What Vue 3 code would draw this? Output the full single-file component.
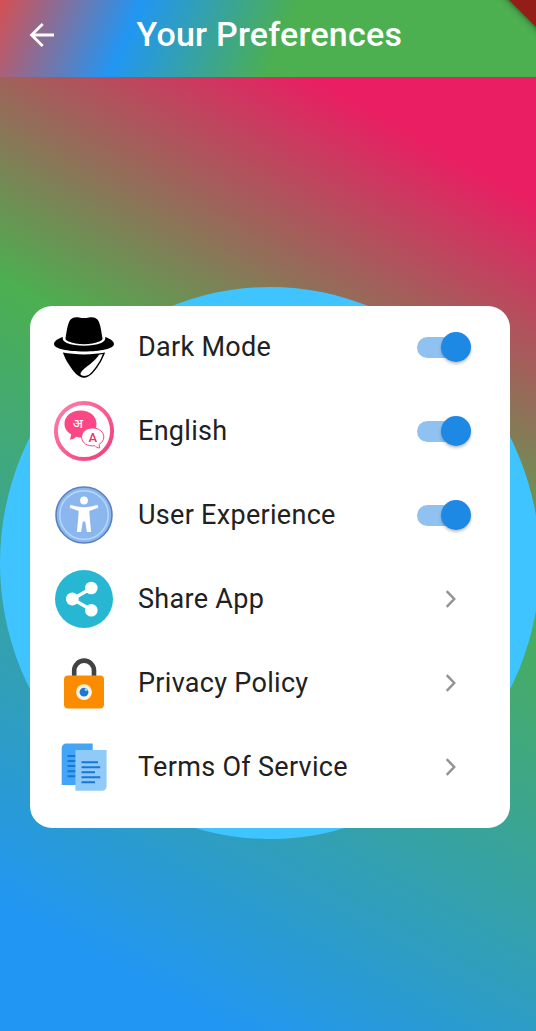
<script setup>
const rows = [
  { icon: 'dark', label: 'Dark Mode', toggle: true },
  { icon: 'language', label: 'English', toggle: true },
  { icon: 'experience', label: 'User Experience', toggle: true },
  { icon: 'share', label: 'Share App', toggle: false },
  { icon: 'privacy', label: 'Privacy Policy', toggle: false },
  { icon: 'terms', label: 'Terms Of Service', toggle: false },
]
</script>

<template>
  <div class="screen">
    <header class="bar">
      <svg class="back" width="28" height="28" viewBox="0 0 28 28">
        <path d="M26 14H4M14.700 3 3.600 14l11.100 11" fill="none" stroke="#fff" stroke-width="2.800" />
      </svg>
      <h1 class="title">Your Preferences</h1>
      <span class="ribbon"></span>
    </header>

    <main class="body">
      <div class="disc"></div>
      <section class="card">
        <div v-for="row in rows" :key="row.label" class="row">
          <svg class="icon" width="80" height="80" viewBox="0 0 80 80">
            <g v-if="row.icon === 'dark'" transform="translate(0 -0.700)">
              <path d="M21.500 32C22.500 27 23.300 17.500 26.300 13.500 28.500 11 32 10.500 35 11.200c2 .5 3 .6 5 .6s3-.1 5-.6c3-.7 6.700-.2 8.700 2.300 3 4 3.800 13.500 4.800 18.500.2 1.200-.8 2.200-2.500 3-9 4-23 4-32 0-1.700-.8-2.700-1.800-2.500-3z" />
              <path d="M18.800 30.800c-4 1.500-8.800 3.700-8.800 7 0 4.700 13.500 7.500 30 7.500s30-2.800 30-7.500c0-3.300-4.800-5.500-8.800-7 .6 2.700-1 4.700-4 5.800-9.500 3.700-25 3.700-34.400 0-3-1.100-4.600-3.100-4-5.800z" />
              <path d="M18.800 46.300c12 2.400 30.400 2.400 42.400 0-1.700 3.600-3.200 8.200-6.700 13-3.700 5.700-8.500 12.200-14.500 12.200S29 64.700 25.500 59.300c-3.500-4.500-5-9.400-6.700-13z" />
              <path d="M58.800 47.600C57 53.500 51.500 62 46 67.500c-2.500 2.700-8.500 2.700-9.500.5-.3-5 13-10.500 18.500-19.600z" fill="#fff" />
            </g>
            <g v-else-if="row.icon === 'language'">
              <defs>
                <linearGradient id="pinkRing" x1="0" y1="0" x2="1" y2="1">
                  <stop offset="0" stop-color="#ff80a9" />
                  <stop offset="1" stop-color="#ef3c7c" />
                </linearGradient>
              </defs>
              <circle cx="40" cy="40" r="28.100" fill="#fff" stroke="url(#pinkRing)" stroke-width="4" />
              <path d="M36.500 19.500c9.400 0 16 5.800 16 13.300S46 46.500 37 46.500c-2 0-3.500-.3-5-.8-1.300 1.600-3 2.500-6 2.800l1.200-5.300c-4.500-2.400-6.700-6-6.700-10.400 0-7.500 6.800-13.300 16-13.300z" fill="#fb4784" />
              <text class="hindi" x="34" y="37" text-anchor="middle">अ</text>
              <path d="M48.500 37c6.600 0 11.300 3.900 11.300 9 0 3.100-1.800 5.700-4.700 7.300l.5 3.700c-2.300-.2-3.700-1-4.700-2.300-7.500 1.200-13.300-2.900-13.300-8.700 0-5.100 4.700-9 10.900-9z" fill="#fff" stroke="#fb4784" stroke-width="1" />
              <text class="latin" x="48.900" y="50.700" text-anchor="middle">A</text>
            </g>
            <g v-else-if="row.icon === 'experience'">
              <circle cx="40" cy="40" r="28" fill="#8cb6ee" stroke="#5b82c0" stroke-width="1.600" />
              <circle cx="40" cy="40" r="24.300" fill="none" stroke="#b4dafd" stroke-width="1.500" />
              <circle cx="40" cy="25.500" r="3.900" fill="#fff" />
              <path d="M26.500 29.800c4.500 1.300 9 2.400 13.500 2.400s9-1.100 13.500-2.400l.8 2.900-9 3.200.6 8.600 1.200 12.400h-4.200L41.200 46.500h-2.400l-1.700 10.400h-4.200l1.200-12.400.6-8.600-9-3.200z" fill="#fff" />
            </g>
            <g v-else-if="row.icon === 'share'">
              <circle cx="40" cy="40" r="29" fill="#27b7d2" />
              <path d="M47.500 29.200 28.500 40l19 11" fill="none" stroke="#fff" stroke-width="3.400" />
              <circle cx="47.300" cy="29" r="6.300" fill="#fff" />
              <circle cx="28.300" cy="40" r="6.400" fill="#fff" />
              <circle cx="47.300" cy="51.200" r="6.300" fill="#fff" />
            </g>
            <g v-else-if="row.icon === 'privacy'">
              <path d="M30.200 35V27.500a9.900 9.900 0 0 1 19.800 0V35" fill="none" stroke="#424242" stroke-width="4.600" />
              <rect x="20" y="32.500" width="40" height="33" rx="4" fill="#fb8c00" />
              <circle cx="40" cy="49.200" r="7.900" fill="#fff3e0" />
              <circle cx="40" cy="49.200" r="4.400" fill="#1e78d2" />
              <circle cx="42.200" cy="46.600" r="1.500" fill="#a9d2f5" />
            </g>
            <g v-else>
              <path d="M22.200 16.500h26.500v41.500H17.700V21a4.500 4.500 0 0 1 4.500-4.500z" fill="#42a5f5" />
              <path d="M23.500 29h9M23.500 34h9M23.500 39h9M23.500 44.300h9M23.500 49.300h9" stroke="#1976d2" stroke-width="2" />
              <path d="M31.400 23h31.200v36.200a4.500 4.500 0 0 1-4.500 4.500H31.400z" fill="#90caf9" />
              <path d="M37.500 35.200h16.500M37.500 40.300h18.700M37.500 45.300h13.500M37.500 50.300h18.700M37.500 55.300h13.500" stroke="#1976d2" stroke-width="1.900" />
            </g>
          </svg>
          <span class="label">{{ row.label }}</span>
          <span v-if="row.toggle" class="switch"><span class="thumb"></span></span>
          <svg v-else class="chevron" width="14" height="20" viewBox="0 0 14 20">
            <path d="m2.700 2.200 7.500 7.800-7.500 7.800" fill="none" stroke="#949494" stroke-width="2.500" />
          </svg>
        </div>
      </section>
    </main>
  </div>
</template>

<style scoped>
.screen {
  width: 536px;
  height: 1031px;
  overflow: hidden;
  display: flex;
  flex-direction: column;
  font-family: Roboto, "Liberation Sans", sans-serif;
}
.bar {
  position: relative;
  overflow: hidden;
  flex: none;
  height: 77px;
  box-sizing: border-box;
  padding: 0 0 7px 28px;
  display: flex;
  align-items: center;
  background: linear-gradient(113.5deg, #f44336 -22px, #2196f3 130px, #4caf50 275px);
}
.back {
  flex: none;
}
.title {
  margin: -2px 0 0 80.5px;
  font-size: 34px;
  line-height: 40px;
  font-weight: 500;
  letter-spacing: 0.22px;
  color: #fff;
  white-space: nowrap;
}
.ribbon {
  position: absolute;
  top: -19.5px;
  right: -42.5px;
  width: 120px;
  height: 24px;
  background: #951d18;
  box-shadow: 0 0 6px rgba(0, 0, 0, 0.6);
  transform: rotate(45deg);
}
.body {
  position: relative;
  flex: 1;
  box-sizing: border-box;
  padding: 229px 26px 0 30px;
  background: linear-gradient(209.33deg, #e91e63 10%, #4caf50 40%, #2196f3 90%);
}
.disc {
  position: absolute;
  left: 0;
  top: 210px;
  width: 540px;
  height: 552px;
  border-radius: 50%;
  background: #40c4ff;
}
.card {
  position: relative;
  box-sizing: border-box;
  height: 522px;
  border-radius: 22px;
  background: #fff;
}
.row {
  height: 84px;
  box-sizing: border-box;
  padding: 0 39px 2px 14px;
  display: flex;
  align-items: center;
}
.icon {
  flex: none;
}
.label {
  flex: 1;
  margin-left: 14px;
  font-size: 27px;
  line-height: 36px;
  letter-spacing: 0.3px;
  color: #212121;
  white-space: nowrap;
}
.switch {
  position: relative;
  width: 54px;
  height: 30px;
  display: flex;
  align-items: center;
  justify-content: flex-end;
}
.switch::before {
  content: "";
  position: absolute;
  left: 0;
  top: 5px;
  width: 48px;
  height: 21px;
  border-radius: 11px;
  background: #8fc2f1;
}
.thumb {
  position: relative;
  width: 30px;
  height: 30px;
  border-radius: 50%;
  background: #1e88e5;
  box-shadow: 0 2px 3px rgba(0, 0, 0, 0.25);
}
.chevron {
  margin-right: 13px;
}
.hindi {
  font: 500 13px "Noto Sans", "Noto Sans Devanagari", sans-serif;
  fill: #fff;
}
.latin {
  font: 500 13px Roboto, sans-serif;
  fill: #e8336f;
}
</style>
